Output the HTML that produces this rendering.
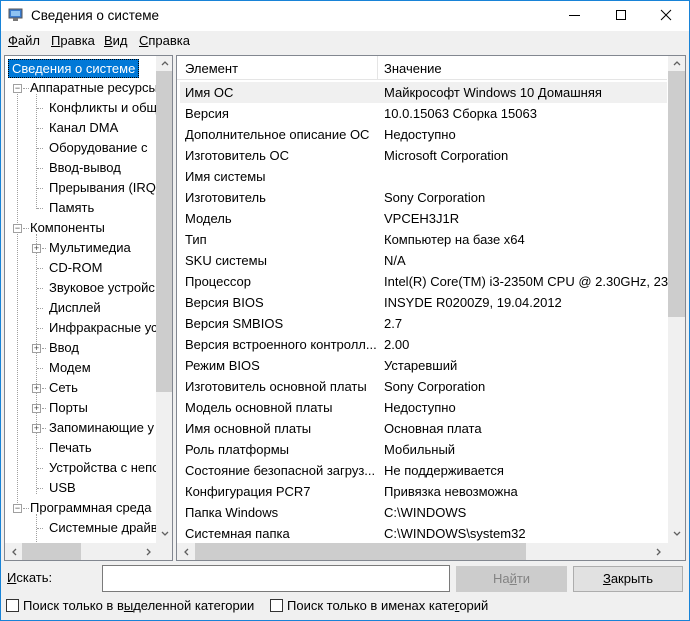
<!DOCTYPE html>
<html><head><meta charset="utf-8"><style>
*{margin:0;padding:0;box-sizing:border-box}
body{width:690px;height:621px;overflow:hidden;background:#f0f0f0;font-family:"Liberation Sans","DejaVu Sans",sans-serif;font-size:13px;color:#000;position:relative}
.a{position:absolute;white-space:nowrap}
.win{position:absolute;left:0;top:0;width:690px;height:621px;border:1px solid #1883d7;border-top:none}
.title{position:absolute;left:0;top:0;width:690px;height:31px;background:#fff;border:1px solid #1883d7;border-bottom:none}
u{text-decoration:underline}
.panel{position:absolute;background:#fff;border:1px solid #828790;overflow:hidden}
.row{position:absolute;height:21px;line-height:21px;white-space:nowrap}
.tr{position:absolute;height:20px;line-height:20px;white-space:nowrap;color:#000}
.box{position:absolute;width:9px;height:9px;border:1px solid #a0a0a0;background:#fff;font-size:9px;line-height:7px;text-align:center;color:#444}
.dv{position:absolute;border-left:1px dotted #a0a0a0}
.dh{position:absolute;border-top:1px dotted #a0a0a0;width:6px}
.sb{position:absolute;background:#f0f0f0}
.th{position:absolute;background:#cdcdcd}
.arr{position:absolute}
</style></head><body>
<div class="title"></div>
<div class="win"></div>
<svg class="a" style="left:8px;top:8px" width="16" height="14"><rect x="1" y="1" width="13" height="9" fill="#3a7ccf" stroke="#555"/><rect x="3" y="3" width="9" height="5" fill="#8ec3f2"/><rect x="5" y="10" width="5" height="3" fill="#777"/></svg>
<div class="a" style="left:31px;top:8px;font-size:13.5px">Сведения о системе</div>
<svg class="a" style="left:560px;top:9px" width="120" height="14"><line x1="9" y1="6.5" x2="20" y2="6.5" stroke="#000"/><rect x="56.5" y="1.5" width="9" height="9" fill="none" stroke="#000"/><path d="M101 1 L111 11 M111 1 L101 11" stroke="#000"/></svg>
<div class="a" style="left:8px;top:33px"><u>Ф</u>айл</div>
<div class="a" style="left:51px;top:33px"><u>П</u>равка</div>
<div class="a" style="left:104px;top:33px"><u>В</u>ид</div>
<div class="a" style="left:139px;top:33px"><u>С</u>правка</div>

<svg width="0" height="0" style="position:absolute"><defs>
<path id="up" d="M1 5 L4 2 L7 5" fill="none" stroke="#606060" stroke-width="1.3"/>
<path id="dn" d="M1 2 L4 5 L7 2" fill="none" stroke="#606060" stroke-width="1.3"/>
<path id="lf" d="M5 1 L2 4 L5 7" fill="none" stroke="#606060" stroke-width="1.3"/>
<path id="rt" d="M2 1 L5 4 L2 7" fill="none" stroke="#606060" stroke-width="1.3"/>
</defs></svg>

<!-- left tree -->
<div class="panel" style="left:4px;top:55px;width:169px;height:506px">
 <div class="a" style="left:3px;top:3px;height:19px;line-height:17px;padding:0 3px;background:#0078d7;color:#fff;border:1px dotted #000">Сведения о системе</div>
 <div class="dv" style="left:12px;top:36px;height:415px"></div>
 <div class="dv" style="left:31px;top:38px;height:115px"></div>
 <div class="dv" style="left:31px;top:178px;height:260px"></div>
 <div class="dv" style="left:31px;top:458px;height:50px"></div>
 <div class="box" style="left:8px;top:28px">−</div><div class="dh" style="left:18px;top:32px"></div><div class="tr" style="left:25px;top:22px">Аппаратные ресурсы</div>
 <div class="box" style="left:8px;top:168px">−</div><div class="dh" style="left:18px;top:172px"></div><div class="tr" style="left:25px;top:162px">Компоненты</div>
 <div class="box" style="left:8px;top:448px">−</div><div class="dh" style="left:18px;top:452px"></div><div class="tr" style="left:25px;top:442px">Программная среда</div>
 <div class="dh" style="left:32px;top:52px"></div><div class="tr" style="left:44px;top:42px">Конфликты и общ</div>
 <div class="dh" style="left:32px;top:72px"></div><div class="tr" style="left:44px;top:62px">Канал DMA</div>
 <div class="dh" style="left:32px;top:92px"></div><div class="tr" style="left:44px;top:82px">Оборудование с</div>
 <div class="dh" style="left:32px;top:112px"></div><div class="tr" style="left:44px;top:102px">Ввод-вывод</div>
 <div class="dh" style="left:32px;top:132px"></div><div class="tr" style="left:44px;top:122px">Прерывания (IRQ</div>
 <div class="dh" style="left:32px;top:152px"></div><div class="tr" style="left:44px;top:142px">Память</div>
 <div class="box" style="left:27px;top:188px">+</div><div class="dh" style="left:37px;top:192px;width:4px"></div><div class="tr" style="left:44px;top:182px">Мультимедиа</div>
 <div class="dh" style="left:32px;top:212px"></div><div class="tr" style="left:44px;top:202px">CD-ROM</div>
 <div class="dh" style="left:32px;top:232px"></div><div class="tr" style="left:44px;top:222px">Звуковое устройс</div>
 <div class="dh" style="left:32px;top:252px"></div><div class="tr" style="left:44px;top:242px">Дисплей</div>
 <div class="dh" style="left:32px;top:272px"></div><div class="tr" style="left:44px;top:262px">Инфракрасные ус</div>
 <div class="box" style="left:27px;top:288px">+</div><div class="dh" style="left:37px;top:292px;width:4px"></div><div class="tr" style="left:44px;top:282px">Ввод</div>
 <div class="dh" style="left:32px;top:312px"></div><div class="tr" style="left:44px;top:302px">Модем</div>
 <div class="box" style="left:27px;top:328px">+</div><div class="dh" style="left:37px;top:332px;width:4px"></div><div class="tr" style="left:44px;top:322px">Сеть</div>
 <div class="box" style="left:27px;top:348px">+</div><div class="dh" style="left:37px;top:352px;width:4px"></div><div class="tr" style="left:44px;top:342px">Порты</div>
 <div class="box" style="left:27px;top:368px">+</div><div class="dh" style="left:37px;top:372px;width:4px"></div><div class="tr" style="left:44px;top:362px">Запоминающие у</div>
 <div class="dh" style="left:32px;top:392px"></div><div class="tr" style="left:44px;top:382px">Печать</div>
 <div class="dh" style="left:32px;top:412px"></div><div class="tr" style="left:44px;top:402px">Устройства с непо</div>
 <div class="dh" style="left:32px;top:432px"></div><div class="tr" style="left:44px;top:422px">USB</div>
 <div class="dh" style="left:32px;top:472px"></div><div class="tr" style="left:44px;top:462px">Системные драйв</div>
 <div class="sb" style="left:151px;top:0;width:17px;height:487px"></div>
 <div class="th" style="left:151px;top:15px;width:17px;height:321px"></div>
 <svg class="arr" style="left:156px;top:4px" width="8" height="8"><use href="#up"/></svg>
 <svg class="arr" style="left:156px;top:474px" width="8" height="8"><use href="#dn"/></svg>
 <div class="sb" style="left:0;top:487px;width:168px;height:17px"></div>
 <div class="th" style="left:17px;top:487px;width:59px;height:17px"></div>
 <svg class="arr" style="left:6px;top:492px" width="8" height="8"><use href="#lf"/></svg>
 <svg class="arr" style="left:140px;top:492px" width="8" height="8"><use href="#rt"/></svg>
</div>

<!-- right list -->
<div class="panel" style="left:176px;top:55px;width:510px;height:506px">
 <div class="a" style="left:0;top:0;width:490px;height:24px;border-bottom:1px solid #e5e5e5"></div>
 <div class="a" style="left:200px;top:0;height:24px;border-left:1px solid #e5e5e5"></div>
 <div class="a" style="left:8px;top:5px">Элемент</div>
 <div class="a" style="left:207px;top:5px">Значение</div>
 <div class="a" style="left:3px;top:26px;width:487px;height:21px;background:#f0f0f0"></div>
 <div id="rows"></div>
 <div class="sb" style="left:491px;top:0;width:17px;height:487px"></div>
 <div class="th" style="left:491px;top:15px;width:17px;height:246px"></div>
 <svg class="arr" style="left:496px;top:4px" width="8" height="8"><use href="#up"/></svg>
 <svg class="arr" style="left:496px;top:474px" width="8" height="8"><use href="#dn"/></svg>
 <div class="sb" style="left:0;top:487px;width:508px;height:17px"></div>
 <div class="th" style="left:18px;top:487px;width:331px;height:17px"></div>
 <svg class="arr" style="left:6px;top:492px" width="8" height="8"><use href="#lf"/></svg>
 <svg class="arr" style="left:478px;top:492px" width="8" height="8"><use href="#rt"/></svg>
</div>

<div class="a" style="left:7px;top:570px"><u>И</u>скать:</div>
<div class="a" style="left:102px;top:565px;width:348px;height:27px;background:#fff;border:1px solid #7a7a7a"></div>
<div class="a" style="left:456px;top:566px;width:111px;height:26px;background:#cccccc;color:#838383;text-align:center;line-height:26px">На<u>й</u>ти</div>
<div class="a" style="left:573px;top:566px;width:110px;height:26px;background:#e1e1e1;border:1px solid #adadad;text-align:center;line-height:24px"><u>З</u>акрыть</div>
<div class="a" style="left:6px;top:599px;width:13px;height:13px;border:1px solid #333;background:#fff"></div>
<div class="a" style="left:23px;top:598px">Поиск только в в<u>ы</u>деленной категории</div>
<div class="a" style="left:270px;top:599px;width:13px;height:13px;border:1px solid #333;background:#fff"></div>
<div class="a" style="left:287px;top:598px">Поиск только в именах кате<u>г</u>орий</div>

<script>
var d=[["Имя ОС","Майкрософт Windows 10 Домашняя"],["Версия","10.0.15063 Сборка 15063"],["Дополнительное описание ОС","Недоступно"],["Изготовитель ОС","Microsoft Corporation"],["Имя системы",""],["Изготовитель","Sony Corporation"],["Модель","VPCEH3J1R"],["Тип","Компьютер на базе x64"],["SKU системы","N/A"],["Процессор","Intel(R) Core(TM) i3-2350M CPU @ 2.30GHz, 2300"],["Версия BIOS","INSYDE R0200Z9, 19.04.2012"],["Версия SMBIOS","2.7"],["Версия встроенного контролл...","2.00"],["Режим BIOS","Устаревший"],["Изготовитель основной платы","Sony Corporation"],["Модель основной платы","Недоступно"],["Имя основной платы","Основная плата"],["Роль платформы","Мобильный"],["Состояние безопасной загруз...","Не поддерживается"],["Конфигурация PCR7","Привязка невозможна"],["Папка Windows","C:\\WINDOWS"],["Системная папка","C:\\WINDOWS\\system32"]];
var h="";d.forEach(function(r,i){var t=26+i*21;h+='<div class="row" style="left:8px;top:'+t+'px;width:192px;overflow:hidden">'+r[0]+'</div><div class="row" style="left:207px;top:'+t+'px;width:284px;overflow:hidden">'+r[1]+'</div>';});
document.getElementById("rows").innerHTML=h;
</script>
</body></html>
